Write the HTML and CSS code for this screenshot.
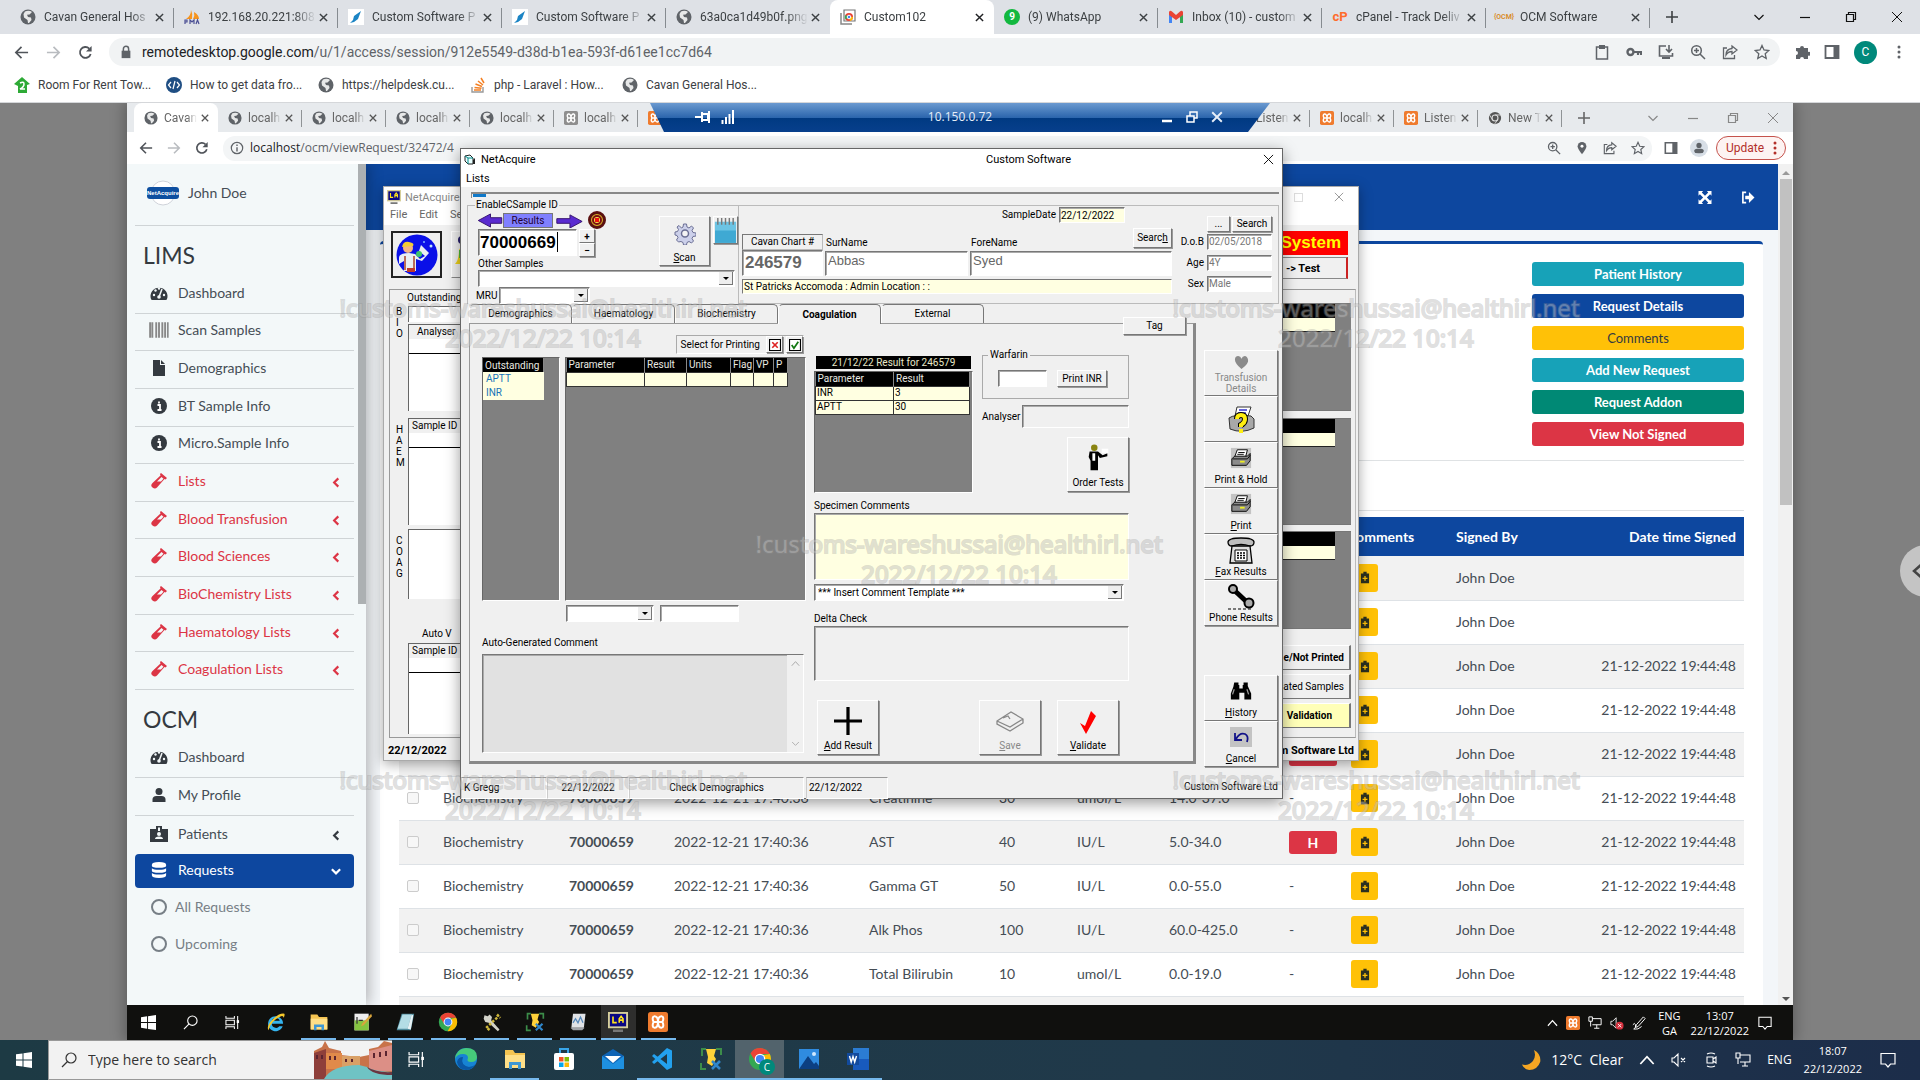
FILE: index.html
```html
<!DOCTYPE html>
<html lang="en">
<head>
<meta charset="utf-8">
<title>Custom102</title>
<link rel="stylesheet" href="styles.css">
</head>
<body>
<svg class="defs" width="0" height="0" aria-hidden="true">
  <symbol id="globe" viewBox="0 0 16 16"><circle cx="8" cy="8" r="7.5" fill="#5f6368"/><path d="M5 2.5Q9 1 12 3L9.500 5.500 7 5.800 8 8l3 .5.500 2.500-2.500 3H8L7.500 11 4 8.500 3.500 5z" fill="#fff" opacity=".85"/></symbol>
  <symbol id="close" viewBox="0 0 10 10"><path d="M1 1l8 8M9 1L1 9" stroke="currentColor" stroke-width="1.600"/></symbol>
  <symbol id="thinx" viewBox="0 0 12 12"><path d="M1 1l10 10M11 1L1 11" stroke="currentColor"/></symbol>
  <symbol id="plus" viewBox="0 0 12 12"><path d="M6 0v12M0 6h12" stroke="currentColor" stroke-width="1.600"/></symbol>
  <symbol id="chev" viewBox="0 0 12 12"><path d="M1.500 4L6 8.500 10.500 4" fill="none" stroke="currentColor" stroke-width="1.200"/></symbol>
  <symbol id="up" viewBox="0 0 12 12"><path d="M1 9l5-5.500L11 9" fill="none" stroke="currentColor" stroke-width="1.300"/></symbol>
  <symbol id="min" viewBox="0 0 12 12"><path d="M1 6.500h10" stroke="currentColor" stroke-width="1.200"/></symbol>
  <symbol id="restore" viewBox="0 0 12 12"><path d="M1.500 3.500h7v7h-7zM3.500 3.500v-2h7v7h-2" fill="none" stroke="currentColor" stroke-width="1.200"/></symbol>
  <symbol id="back" viewBox="0 0 16 16"><path d="M15 8H2M8 2L2 8l6 6" fill="none" stroke="currentColor" stroke-width="1.800"/></symbol>
  <symbol id="fwd" viewBox="0 0 16 16"><path d="M1 8h13M8 2l6 6-6 6" fill="none" stroke="currentColor" stroke-width="1.800"/></symbol>
  <symbol id="reload" viewBox="0 0 16 16"><path d="M13.500 9.500A5.800 5.800 0 1 1 12 3.800" fill="none" stroke="currentColor" stroke-width="1.900"/><path d="M14.500 1v6h-6z" fill="currentColor"/></symbol>
  <symbol id="lock" viewBox="0 0 16 16"><path d="M3 6.500h10V15H3z" fill="currentColor"/><path d="M5 7V4.500a3 3 0 0 1 6 0V7" fill="none" stroke="currentColor" stroke-width="1.700"/></symbol>
  <symbol id="info" viewBox="0 0 16 16"><circle cx="8" cy="8" r="6.500" fill="none" stroke="currentColor" stroke-width="1.400"/><path d="M8 7v5M8 4v1.700" stroke="currentColor" stroke-width="1.600"/></symbol>
  <symbol id="clip" viewBox="0 0 16 16"><path d="M2.500 3h11v12h-11z" fill="none" stroke="currentColor" stroke-width="1.500"/><path d="M5 1h6v4H5z" fill="currentColor"/></symbol>
  <symbol id="key" viewBox="0 0 16 16"><circle cx="4.500" cy="8" r="3" fill="none" stroke="currentColor" stroke-width="2.400"/><path d="M7 8h8v3M12 8v3" stroke="currentColor" stroke-width="2.200" fill="none"/></symbol>
  <symbol id="install" viewBox="0 0 16 16"><path d="M8 2H1.500v10h13V9M11 1v7M8 5l3 3 3-3" fill="none" stroke="currentColor" stroke-width="1.600"/><path d="M4 13h8v2H4z" fill="currentColor"/></symbol>
  <symbol id="zoomi" viewBox="0 0 16 16"><circle cx="6.500" cy="6.500" r="4.800" fill="none" stroke="currentColor" stroke-width="1.500"/><path d="M10 10l5 5M6.500 4v5M4 6.500h5" stroke="currentColor" stroke-width="1.500"/></symbol>
  <symbol id="share" viewBox="0 0 16 16"><path d="M5 4H1.500v10.500h11V11M10 2l5 4-5 4V7.500Q6 7.500 4 11q0-6 6-6.500z" fill="none" stroke="currentColor" stroke-width="1.300"/></symbol>
  <symbol id="star" viewBox="0 0 16 16"><path d="M8 1.500l2 4.500 4.800.5-3.600 3.200 1 4.800L8 12l-4.200 2.500 1-4.800L1.200 6.500 6 6z" fill="none" stroke="currentColor" stroke-width="1.300"/></symbol>
  <symbol id="puzzle" viewBox="0 0 16 16"><path d="M2 4h4a2 2 0 1 1 4 0h4v4a2 2 0 1 1 0 3.500V15h-4a2 2 0 1 0-4 0H2v-4a2 2 0 1 0 0-4z" fill="currentColor"/></symbol>
  <symbol id="panel" viewBox="0 0 16 16"><path d="M1.500 2h13v12h-13z" fill="none" stroke="currentColor" stroke-width="1.800"/><path d="M9.500 2h5v12h-5z" fill="currentColor"/></symbol>
  <symbol id="dots" viewBox="0 0 16 16"><circle cx="8" cy="3" r="1.500" fill="currentColor"/><circle cx="8" cy="8" r="1.500" fill="currentColor"/><circle cx="8" cy="13" r="1.500" fill="currentColor"/></symbol>
  <symbol id="pin" viewBox="0 0 16 16"><path d="M8 1a5 5 0 0 1 5 5c0 3.500-5 9-5 9S3 9.500 3 6a5 5 0 0 1 5-5z" fill="currentColor"/><circle cx="8" cy="6" r="1.700" fill="#fff"/></symbol>
  <symbol id="person" viewBox="0 0 16 16"><circle cx="8" cy="4.500" r="3.500" fill="currentColor"/><path d="M1.500 15v-2.500q0-3.500 4-3.500h5q4 0 4 3.500V15z" fill="currentColor"/></symbol>
  <symbol id="blue" viewBox="0 0 16 16"><path d="M0 0h16v16H0z" fill="#fff"/><path d="M13 2L6 7l-1 4-3 3 4-1 4-3z" fill="#1b84c4"/></symbol>
  <symbol id="pma" viewBox="0 0 16 16"><path d="M7 1Q9 5 8 10H2q5-3 5-9zM10 3q5 3 5 7H9q2-3 1-7z" fill="#f7941d"/><path d="M1 15v-4h2v2H1M6 15v-4l2 2 2-2v4M12 15l1.500-4 1.500 4" fill="none" stroke="#4b4f94" stroke-width="1.200"/></symbol>
  <symbol id="crd" viewBox="0 0 16 16"><path d="M4 1h11v11H4z" fill="#fff" stroke="#777" stroke-width="1.200"/><path d="M1 4v11h11" fill="none" stroke="#888" stroke-width="1.500"/><circle cx="9" cy="8" r="4" fill="#ea4335"/><path d="M9 8l-3.500 2.500A4 4 0 0 1 5.500 6z" fill="#34a853"/><path d="M9 8h4q0 3-3 4z" fill="#fbbc04"/><circle cx="9" cy="8" r="1.800" fill="#4285f4" stroke="#fff"/></symbol>
  <symbol id="gmail" viewBox="0 0 16 16"><path d="M1 14V3l3 2v9z" fill="#4285f4"/><path d="M15 14V3l-3 2v9z" fill="#34a853"/><path d="M1 3q1-2 3-.5l4 3.500 4-3.500Q14 1 15 3v3l-7 5-7-5z" fill="#ea4335"/></symbol>
  <symbol id="xampp" viewBox="0 0 16 16"><rect width="16" height="16" rx="2" fill="#ef7b2e"/><path d="M4.500 3.500Q8 3 8 8t3.500 4.500M11.500 3.500Q8 3 8 8t-3.500 4.500M4.500 3.500q-1.500 1.500 0 4.500-1.500 3 0 4.500M11.500 3.500q1.500 1.500 0 4.500 1.500 3 0 4.500M4.500 8h7" fill="none" stroke="#fff" stroke-width="1.600"/></symbol>
  <symbol id="chrome" viewBox="0 0 24 24"><circle cx="12" cy="12" r="11" fill="#34a853"/><path d="M2.500 6.500A11 11 0 0 1 21.800 7H12l-4.500 7.500z" fill="#ea4335"/><path d="M21.800 7A11 11 0 0 1 11.500 23l5-8.500L16 8z" fill="#fbbc04"/><circle cx="12" cy="12" r="5.300" fill="#fff"/><circle cx="12" cy="12" r="4.100" fill="#4285f4"/></symbol>
  <symbol id="chromeg" viewBox="0 0 16 16"><circle cx="8" cy="8" r="7" fill="#555"/><circle cx="8" cy="8" r="3.400" fill="#555" stroke="#ddd" stroke-width="1.300"/><path d="M8 4.500h7M5 10L1.500 4M11 10l-3.500 5" stroke="#ddd"/></symbol>
  <symbol id="win" viewBox="0 0 16 16"><path d="M0 2.300L6.500 1.400v6.100H0zM7.500 1.200L16 0v7.500H7.500zM0 8.500h6.500v6.100L0 13.700zM7.500 8.500H16V16l-8.500-1.200z" fill="#fff"/></symbol>
  <symbol id="mag" viewBox="0 0 16 16"><circle cx="10" cy="6" r="5" fill="none" stroke="currentColor" stroke-width="1.200"/><path d="M6.500 9.500L1 15" stroke="currentColor" stroke-width="1.200"/></symbol>
  <symbol id="taskv" viewBox="0 0 16 16"><path d="M1 1v2.500h9V1M1 15v-2.500h9V15M1 5.500h9v5H1zM13.500 1v14" fill="none" stroke="#fff" stroke-width="1.100"/><path d="M12.500 5.500h2.500v3h-2.500z" fill="#fff"/></symbol>
  <symbol id="folder" viewBox="0 0 24 24"><path d="M2 3h8l2 3h10v15H2z" fill="#f5c451"/><path d="M2 8h20v13H2z" fill="#ffdf87"/><path d="M6 22v-7h12v7h-3v-4H9v4z" fill="#3f97d3"/></symbol>
  <symbol id="ie" viewBox="0 0 24 24"><path d="M20 14H7a5 5 0 0 0 9 3h4A9 9 0 1 1 20.500 14zM7 10.500h9.500a5 5 0 0 0-9.500 0z" fill="#35b4ee"/><path d="M3 22q-3-5 5-13T22 2q1 2-1 5 0-3-3-2Q5 11 3 22z" fill="#f6c92c"/></symbol>
  <symbol id="npp" viewBox="0 0 24 24"><path d="M3 2h17v20H3z" fill="#eee"/><path d="M3 10h17v12H3z" fill="#85c440"/><path d="M6 6v8M8 10h5" stroke="#333" stroke-width="1.500"/><path d="M23 2L12 14l-1 3 3-1L24 5z" fill="#d9a53c"/></symbol>
  <symbol id="notepad" viewBox="0 0 24 24"><path d="M8 2h15l-4 20H2z" fill="#4f8b9c"/><path d="M9 3h11l-5 17H3z" fill="#b4dde5"/><path d="M15 20l5-17 2 1-3 17z" fill="#e8f3f5"/></symbol>
  <symbol id="tools" viewBox="0 0 24 24"><path d="M3 4l4 1 2-2 3 3-1 4 10 11-2 2L8 13l-4-1-2-4z" fill="#d2d2c8"/><path d="M5 19L20 5M7 22l3-4M18 3l4 4" stroke="#cfb83b" stroke-width="3" stroke-dasharray="3 2"/></symbol>
  <symbol id="putty" viewBox="0 0 24 24"><path d="M7 2h10l-2 7 2 3-4 7-5-3 1-6z" fill="#ffd23a"/><path d="M3 9V2h4M17 2h5v6M2 16v6h5" fill="none" stroke="#3c8d4a" stroke-width="2"/><path d="M13 14l8 8M21 14l-8 8" stroke="#2f86ca" stroke-width="2.500"/></symbol>
  <symbol id="doc" viewBox="0 0 24 24"><path d="M6 2h15l-2 17H4z" fill="#e0e3e6"/><path d="M6 13l3-5 3 5 3-7 3 7" fill="none" stroke="#5689ba" stroke-width="1.500"/><path d="M3 19h17l-3 3H6z" fill="#9fa3a8"/></symbol>
  <symbol id="la" viewBox="0 0 16 16"><path d="M0 0h16v13H0z" fill="#d6cf9a"/><path d="M1.500 1.500h13v10h-13z" fill="#090783"/><path d="M4 3.500v5h3M9 8.500v-3l1.500-2 1.500 2v3M9 6.500h3" stroke="#ffe31c" fill="none" stroke-width="1.300"/><path d="M4 14h8v2H4z" fill="#777"/></symbol>
  <symbol id="edge" viewBox="0 0 24 24"><circle cx="12" cy="12" r="11" fill="#1783d4"/><path d="M1 12Q2 2 12 1q11 0 11 9 0 5-6 5-5 0-3-4 0-4-5-4-6 0-8 5z" fill="#46ca7b"/><path d="M9 10q-3 8 6 10 4 0 7-3-4 6-10 6Q4 22 3 15q1-5 6-5z" fill="#0a57a4"/></symbol>
  <symbol id="store" viewBox="0 0 24 24"><path d="M8 7V2h8v5" fill="none" stroke="#38a5e8" stroke-width="2"/><rect x="2" y="6" width="20" height="17" rx="2" fill="#fff"/><path d="M7 10h4.500v4.500H7z" fill="#f35325"/><path d="M12.500 10H17v4.500h-4.500z" fill="#81bc06"/><path d="M7 15.500h4.500V20H7z" fill="#05a6f0"/><path d="M12.500 15.500H17V20h-4.500z" fill="#ffba08"/></symbol>
  <symbol id="mail" viewBox="0 0 24 24"><path d="M1 9L12 2l11 7v13H1z" fill="#0f64b5"/><path d="M4 9h16l-8 7z" fill="#fff"/><path d="M1 22V9l11 8 11-8v13z" fill="#1e90e0"/></symbol>
  <symbol id="code" viewBox="0 0 24 24"><path d="M17 1l5 2.500v17L17 23 2 9l2-2 13 10V7L4 17l-2-2z" fill="#23a1ee"/></symbol>
  <symbol id="photo" viewBox="0 0 24 24"><path d="M2 2h20v20H2z" fill="#2f8be0"/><path d="M2 22L11 9l6 8 2-2 3 4v3z" fill="#0c3f82"/><circle cx="17" cy="7" r="2" fill="#cfe9ff"/></symbol>
  <symbol id="word" viewBox="0 0 24 24"><path d="M7 1h16v22H7z" fill="#2b7cd3"/><path d="M7 12h16v11H7z" fill="#185abd"/><path d="M1 6h12v12H1z" fill="#124a9d"/><path d="M3.500 9l1.700 6L7 9.500 8.700 15l1.800-6" fill="none" stroke="#fff" stroke-width="1.400"/></symbol>
  <symbol id="net" viewBox="0 0 16 16"><path d="M5 3h10v7H5M10 10v4M7 14h6M1 1h4v5H1zM3 6v6" fill="none" stroke="#fff" stroke-width="1.100"/></symbol>
  <symbol id="mute" viewBox="0 0 16 16"><path d="M1 6h2l4-4v12l-4-4H1zM10 6l4 4M14 6l-4 4" fill="none" stroke="#fff" stroke-width="1.100"/></symbol>
  <symbol id="note" viewBox="0 0 16 16"><path d="M1 1.500h14v10.500h-4.500L8 15l-2.500-3H1z" fill="none" stroke="#fff" stroke-width="1.200"/></symbol>
  <symbol id="pen" viewBox="0 0 16 16"><path d="M13 1l2 2-8 9-3 1 1-3zM1 10q2-3 3 0t-2 5q5 1 9-3" fill="none" stroke="#fff" stroke-width="1.100"/></symbol>
  <symbol id="cam" viewBox="0 0 16 16"><path d="M4 5h6v6H4zM10 7l3-2v6l-3-2M4 2q4-2 8 0M4 14q4 2 8 0" fill="none" stroke="#fff" stroke-width="1.100"/></symbol>
  <symbol id="dash" viewBox="0 0 18 16"><path d="M1 14A8.500 8.500 0 1 1 17 14q0 1-1.500 1h-13Q1 15 1 14z" fill="currentColor"/><g fill="#f3f8f9"><circle cx="4" cy="10" r="1.200"/><circle cx="5.500" cy="5.500" r="1.200"/><circle cx="9" cy="3.500" r="1.200"/><circle cx="14" cy="10" r="1.200"/><circle cx="9" cy="12" r="1.800"/></g><path d="M9 12l3-8" stroke="#f3f8f9" stroke-width="1.500"/></symbol>
  <symbol id="bars" viewBox="0 0 18 14"><path d="M1 0v14M3 0v14M6.500 0v14M9 0v14M12 0v14M14.500 0v14" stroke="#888" stroke-width="1.700"/><path d="M17 0v14" stroke="#555"/></symbol>
  <symbol id="file" viewBox="0 0 14 16"><path d="M1 0h7v5h5v11H1z" fill="currentColor"/><path d="M9 0l4 4H9z" fill="currentColor"/></symbol>
  <symbol id="infof" viewBox="0 0 16 16"><circle cx="8" cy="8" r="8" fill="currentColor"/><path d="M6.500 7H9v5m-2.500 0h4M8 3.500v2" stroke="#fff" stroke-width="1.800" fill="none"/></symbol>
  <symbol id="vial" viewBox="0 0 16 16"><path d="M10 0l6 5-1.500 1.500-1-.5L6 14.500Q4 16.500 1.500 14.500T1.500 10L9.500 2.500 9 1z" fill="currentColor"/><path d="M10.500 4L12.500 5.800 10 8.500H6z" fill="#f3f8f9"/></symbol>
  <symbol id="left" viewBox="0 0 8 12"><path d="M6.500 1.500L2 6l4.500 4.500" fill="none" stroke="currentColor" stroke-width="2.400"/></symbol>
  <symbol id="badge" viewBox="0 0 18 16"><path d="M0 3h6V0h6v3h6v13H0z" fill="currentColor"/><circle cx="9" cy="8" r="2" fill="#f3f8f9"/><path d="M5 13q0-2.500 4-2.500t4 2.500zM8 1.500h2V5H8z" fill="#f3f8f9"/></symbol>
  <symbol id="db" viewBox="0 0 16 18"><path d="M0 3q0-3 8-3t8 3v1.500q0 2-8 2t-8-2zM0 7q2 1.700 8 1.700T16 7v3q0 2-8 2t-8-2zM0 12.500q2 1.700 8 1.700t8-1.700V15q0 3-8 3t-8-3z" fill="#fff"/></symbol>
  <symbol id="notem" viewBox="0 0 12 16"><path d="M1 3h10v12H1zM4 1h4v3H4z" fill="#2c3020"/><path d="M6 6v6M3 9h6" stroke="#ffc107" stroke-width="1.600"/></symbol>
  <symbol id="printer" viewBox="0 0 24 24"><path d="M1 1h22v22H1z" fill="#c3c3c3"/><path d="M8 3h11l-2 8H5z" fill="#fff" stroke="#000"/><path d="M9 6h7M8 8h7" stroke="#000"/><path d="M5 10h14l3-3v8l-4 5H2v-7z" fill="#8b8b8b" stroke="#000"/><path d="M3 13h16l3-4" fill="none" stroke="#000"/><path d="M11 16h5" stroke="#ee2" stroke-width="2"/></symbol>
</svg>

<header class="host">
  <nav class="tabs" aria-label="Browser tabs">
    <div class="tab"><svg><use href="#globe"/></svg><span>Cavan General Hos</span><svg class="x"><use href="#close"/></svg></div>
    <div class="tab"><svg><use href="#pma"/></svg><span>192.168.20.221:808</span><svg class="x"><use href="#close"/></svg></div>
    <div class="tab"><svg><use href="#blue"/></svg><span>Custom Software P</span><svg class="x"><use href="#close"/></svg></div>
    <div class="tab"><svg><use href="#blue"/></svg><span>Custom Software P</span><svg class="x"><use href="#close"/></svg></div>
    <div class="tab last"><svg><use href="#globe"/></svg><span>63a0ca1d49b0f.png</span><svg class="x"><use href="#close"/></svg></div>
    <div class="tab active"><svg><use href="#crd"/></svg><span>Custom102</span><svg class="x"><use href="#close"/></svg></div>
    <div class="tab"><b class="wa">9</b><span>(9) WhatsApp</span><svg class="x"><use href="#close"/></svg></div>
    <div class="tab"><svg><use href="#gmail"/></svg><span>Inbox (10) - custom</span><svg class="x"><use href="#close"/></svg></div>
    <div class="tab"><b class="cp">cP</b><span>cPanel - Track Deliv</span><svg class="x"><use href="#close"/></svg></div>
    <div class="tab"><b class="ocm">{OCM}</b><span>OCM Software</span><svg class="x"><use href="#close"/></svg></div>
    <svg class="add"><use href="#plus"/></svg>
    <div class="winctl"><svg><use href="#chev"/></svg><svg><use href="#min"/></svg><svg><use href="#restore"/></svg><svg><use href="#thinx"/></svg></div>
  </nav>
  <div class="toolbar">
    <svg class="nav"><use href="#back"/></svg><svg class="nav dim"><use href="#fwd"/></svg><svg class="nav"><use href="#reload"/></svg>
    <div class="url"><svg><use href="#lock"/></svg><p><em>remotedesktop.google.com</em>/u/1/access/session/912e5549-d38d-b1ea-593f-d61ee1cc7d64</p>
      <div class="acts"><svg><use href="#clip"/></svg><svg><use href="#key"/></svg><svg><use href="#install"/></svg><svg><use href="#zoomi"/></svg><svg><use href="#share"/></svg><svg><use href="#star"/></svg></div></div>
    <div class="ext"><svg><use href="#puzzle"/></svg><svg><use href="#panel"/></svg><b class="avatar">C</b><svg><use href="#dots"/></svg></div>
  </div>
  <nav class="marks" aria-label="Bookmarks">
    <a href="#"><svg viewBox="0 0 16 16"><path d="M0 7l8-7 8 7-3 1v8H4V9z" fill="#2eaa36"/><path d="M6 6q4-2 4 1t-4 5h5" fill="none" stroke="#fff" stroke-width="1.500"/></svg>Room For Rent Tow...</a>
    <a href="#"><svg viewBox="0 0 16 16"><circle cx="8" cy="8" r="8" fill="#1f4e83"/><path d="M5 5L2.500 8 5 11M11 5l2.500 3-2.500 3M9 4l-2 8" fill="none" stroke="#fff" stroke-width="1.200"/></svg>How to get data fro...</a>
    <a href="#"><svg><use href="#globe"/></svg>https://helpdesk.cu...</a>
    <a href="#"><svg viewBox="0 0 16 16"><path d="M2 10v5h11v-5" fill="none" stroke="#999" stroke-width="1.400"/><path d="M4 13h7M4.500 10.500l7 .8M5.500 7l6.500 2.500M8 4l5 4M11 1l3 5" stroke="#f48024" stroke-width="1.500"/></svg>php - Laravel : How...</a>
    <a href="#"><svg><use href="#globe"/></svg>Cavan General Hos...</a>
  </nav>
</header>

<main class="stage">
<div class="session">
  <nav class="rtabs" aria-label="Remote browser tabs">
    <div class="rtab active"><svg><use href="#globe"/></svg><span>Cavan</span><svg class="x"><use href="#close"/></svg></div>
    <div class="rtab"><svg><use href="#globe"/></svg><span>localh</span><svg class="x"><use href="#close"/></svg></div>
    <div class="rtab"><svg><use href="#globe"/></svg><span>localh</span><svg class="x"><use href="#close"/></svg></div>
    <div class="rtab"><svg><use href="#globe"/></svg><span>localh</span><svg class="x"><use href="#close"/></svg></div>
    <div class="rtab"><svg><use href="#globe"/></svg><span>localh</span><svg class="x"><use href="#close"/></svg></div>
    <div class="rtab"><svg class="grey"><use href="#xampp"/></svg><span>localh</span><svg class="x"><use href="#close"/></svg></div>
    <div class="rtab"><svg><use href="#xampp"/></svg></div>
    <div class="rtab"></div><div class="rtab"></div><div class="rtab"></div><div class="rtab"></div><div class="rtab"></div><div class="rtab"></div>
    <div class="rtab"><svg><use href="#xampp"/></svg><span>Listen</span><svg class="x"><use href="#close"/></svg></div>
    <div class="rtab"><svg><use href="#xampp"/></svg><span>localh</span><svg class="x"><use href="#close"/></svg></div>
    <div class="rtab"><svg><use href="#xampp"/></svg><span>Listen</span><svg class="x"><use href="#close"/></svg></div>
    <div class="rtab"><svg><use href="#chromeg"/></svg><span>New T</span><svg class="x"><use href="#close"/></svg></div>
    <svg class="add"><use href="#plus"/></svg>
    <div class="rctl"><svg><use href="#chev"/></svg><svg><use href="#min"/></svg><svg><use href="#restore"/></svg><svg><use href="#thinx"/></svg></div>
  </nav>
  <div class="rbar">
    <svg class="nav"><use href="#back"/></svg><svg class="nav dim"><use href="#fwd"/></svg><svg class="nav"><use href="#reload"/></svg>
    <div class="rurl"><svg><use href="#info"/></svg><p><em>localhost</em>/ocm/viewRequest/32472/4</p>
      <div class="racts"><svg><use href="#zoomi"/></svg><svg><use href="#pin"/></svg><svg><use href="#share"/></svg><svg><use href="#star"/></svg></div></div>
    <svg class="side"><use href="#panel"/></svg><svg class="who"><use href="#person"/></svg>
    <button class="update">Update<svg><use href="#dots"/></svg></button>
  </div>

  <div class="rpage">
    <aside class="sidebar">
      <div class="menu">
        <div class="user"><svg viewBox="0 0 32 26"><circle cx="16" cy="13" r="12" fill="#fff" stroke="#cfd3da"/><rect y="7" width="32" height="12" rx="3" fill="#0d4fa0"/><text x="16" y="15" text-anchor="middle" class="logotext">NetAcquire</text></svg>John Doe</div>
        <h2>LIMS</h2>
        <ul class="lims">
          <li><a href="#"><svg><use href="#dash"/></svg>Dashboard</a></li>
          <li><a href="#"><svg><use href="#bars"/></svg>Scan Samples</a></li>
          <li><a href="#"><svg><use href="#file"/></svg>Demographics</a></li>
          <li><a href="#"><svg><use href="#infof"/></svg>BT Sample Info</a></li>
          <li><a href="#"><svg><use href="#infof"/></svg>Micro.Sample Info</a></li>
          <li class="red"><a href="#"><svg><use href="#vial"/></svg>Lists<svg class="arr"><use href="#left"/></svg></a></li>
          <li class="red"><a href="#"><svg><use href="#vial"/></svg>Blood Transfusion<svg class="arr"><use href="#left"/></svg></a></li>
          <li class="red"><a href="#"><svg><use href="#vial"/></svg>Blood Sciences<svg class="arr"><use href="#left"/></svg></a></li>
          <li class="red"><a href="#"><svg><use href="#vial"/></svg>BioChemistry Lists<svg class="arr"><use href="#left"/></svg></a></li>
          <li class="red"><a href="#"><svg><use href="#vial"/></svg>Haematology Lists<svg class="arr"><use href="#left"/></svg></a></li>
          <li class="red"><a href="#"><svg><use href="#vial"/></svg>Coagulation Lists<svg class="arr"><use href="#left"/></svg></a></li>
        </ul>
        <h2>OCM</h2>
        <ul class="ocmlist">
          <li><a href="#"><svg><use href="#dash"/></svg>Dashboard</a></li>
          <li><a href="#"><svg><use href="#person"/></svg>My Profile</a></li>
          <li class="plain"><a href="#"><svg><use href="#badge"/></svg>Patients<svg class="arr"><use href="#left"/></svg></a></li>
          <li class="on"><a href="#"><svg><use href="#db"/></svg>Requests<svg class="arr down"><use href="#left"/></svg></a></li>
          <li class="sub"><a href="#"><i></i>All Requests</a></li>
          <li class="sub"><a href="#"><i></i>Upcoming</a></li>
        </ul>
      </div>
      <div class="sscroll"></div>
    </aside>

    <section class="content">
      <div class="bluebar"><svg viewBox="0 0 14 14"><path d="M0 0h5L3.500 1.500 7 5l3.500-3.500L9 0h5v5l-1.500-1.500L9 7l3.500 3.500L14 9v5H9l1.500-1.500L7 9l-3.500 3.500L5 14H0V9l1.500 1.500L5 7 1.500 3.500 0 5z" fill="#fff"/></svg><svg viewBox="0 0 14 14"><path d="M5 1.500H1.500v11H5" fill="none" stroke="#fff" stroke-width="1.800"/><path d="M4 5h4V1l6 6-6 6V9H4z" fill="#fff"/></svg></div>
      <div class="card">
        <div class="actions">
          <button class="teal">Patient History</button><button class="navy">Request Details</button><button class="amber">Comments</button><button class="teal">Add New Request</button><button class="green">Request Addon</button><button class="crimson">View Not Signed</button>
        </div>
        <div class="filter"></div>
        <table class="results">
          <colgroup><col class="c1"><col class="c2"><col class="c3"><col class="c4"><col class="c5"><col class="c6"><col class="c7"><col class="c8"><col class="c9"><col class="c10"><col class="c11"><col></colgroup>
          <thead><tr><th></th><th></th><th></th><th></th><th></th><th></th><th></th><th></th><th></th><th class="cm">Comments</th><th>Signed By</th><th class="r">Date time Signed</th></tr></thead>
          <tbody>
          <tr><td colspan="9"></td><td><button class="nb" aria-label="Note"><svg><use href="#notem"/></svg></button></td><td>John Doe</td><td></td></tr>
          <tr><td colspan="9"></td><td><button class="nb" aria-label="Note"><svg><use href="#notem"/></svg></button></td><td>John Doe</td><td></td></tr>
          <tr><td colspan="9"></td><td><button class="nb" aria-label="Note"><svg><use href="#notem"/></svg></button></td><td>John Doe</td><td class="r">21-12-2022 19:44:48</td></tr>
          <tr><td colspan="9"></td><td><button class="nb" aria-label="Note"><svg><use href="#notem"/></svg></button></td><td>John Doe</td><td class="r">21-12-2022 19:44:48</td></tr>
          <tr><td colspan="8"></td><td><span class="high"></span></td><td><button class="nb" aria-label="Note"><svg><use href="#notem"/></svg></button></td><td>John Doe</td><td class="r">21-12-2022 19:44:48</td></tr>
          <tr><td><input type="checkbox" aria-label="Select"></td><td>Biochemistry</td><td><b>70000659</b></td><td>2022-12-21 17:40:36</td><td>Creatinine</td><td>30</td><td>umol/L</td><td>14.0-37.0</td><td>-</td><td><button class="nb" aria-label="Note"><svg><use href="#notem"/></svg></button></td><td>John Doe</td><td class="r">21-12-2022 19:44:48</td></tr>
          <tr><td><input type="checkbox" aria-label="Select"></td><td>Biochemistry</td><td><b>70000659</b></td><td>2022-12-21 17:40:36</td><td>AST</td><td>40</td><td>IU/L</td><td>5.0-34.0</td><td><span class="high">H</span></td><td><button class="nb" aria-label="Note"><svg><use href="#notem"/></svg></button></td><td>John Doe</td><td class="r">21-12-2022 19:44:48</td></tr>
          <tr><td><input type="checkbox" aria-label="Select"></td><td>Biochemistry</td><td><b>70000659</b></td><td>2022-12-21 17:40:36</td><td>Gamma GT</td><td>50</td><td>IU/L</td><td>0.0-55.0</td><td>-</td><td><button class="nb" aria-label="Note"><svg><use href="#notem"/></svg></button></td><td>John Doe</td><td class="r">21-12-2022 19:44:48</td></tr>
          <tr><td><input type="checkbox" aria-label="Select"></td><td>Biochemistry</td><td><b>70000659</b></td><td>2022-12-21 17:40:36</td><td>Alk Phos</td><td>100</td><td>IU/L</td><td>60.0-425.0</td><td>-</td><td><button class="nb" aria-label="Note"><svg><use href="#notem"/></svg></button></td><td>John Doe</td><td class="r">21-12-2022 19:44:48</td></tr>
          <tr><td><input type="checkbox" aria-label="Select"></td><td>Biochemistry</td><td><b>70000659</b></td><td>2022-12-21 17:40:36</td><td>Total Bilirubin</td><td>10</td><td>umol/L</td><td>0.0-19.0</td><td>-</td><td><button class="nb" aria-label="Note"><svg><use href="#notem"/></svg></button></td><td>John Doe</td><td class="r">21-12-2022 19:44:48</td></tr>
          <tr><td colspan="12"></td></tr>
          </tbody>
        </table>
      </div>
    </section>
    <div class="pscroll"><i class="tri u"></i><div></div><i class="tri d"></i></div>
  </div>

  <footer class="rtask">
    <div class="sys"><svg><use href="#win"/></svg><svg><use href="#mag"/></svg><svg><use href="#taskv"/></svg></div>
    <div class="apps">
      <span><svg><use href="#ie"/></svg></span><span class="run"><svg><use href="#folder"/></svg></span><span class="run"><svg><use href="#npp"/></svg></span><span class="run"><svg><use href="#notepad"/></svg></span><span class="run"><svg><use href="#chrome"/></svg></span><span class="run"><svg><use href="#tools"/></svg></span><span class="run"><svg><use href="#putty"/></svg></span><span class="run"><svg><use href="#doc"/></svg></span><span class="run lit"><svg><use href="#la"/></svg></span><span class="run"><svg><use href="#xampp"/></svg></span>
    </div>
    <div class="rtray"><svg><use href="#up"/></svg><svg><use href="#xampp"/></svg><svg><use href="#net"/></svg><svg viewBox="0 0 16 16"><path d="M1 6h2l4-4v12l-4-4H1z" fill="none" stroke="#fff"/><circle cx="11" cy="11" r="4.500" fill="#d32f3c"/><path d="M9 9l4 4M13 9l-4 4" stroke="#fff"/></svg><svg><use href="#pen"/></svg><p class="lang">ENG<br>GA</p><p class="clock">13:07<br>22/12/2022</p><svg><use href="#note"/></svg></div>
  </footer>

  <section class="backwin">
    <div class="btitle"><svg><use href="#la"/></svg><span>NetAcquire</span><i class="sq"></i><svg class="bx"><use href="#thinx"/></svg></div>
    <div class="bmenu"><span>File</span><span>Edit</span><span>Search</span></div>
    <div class="btools"><button class="prof" aria-label="Laboratory"><svg viewBox="0 0 42 42"><circle cx="21" cy="21" r="20.500" fill="#0a10e8"/><path d="M3 24q0-5 10-5l6 1 5 5 5-3-6-5 2-6 8 8-7 8-6-2v12H8V27l-5 3z" fill="#e9eef2"/><circle cx="12" cy="14" r="5" fill="#f4b483"/><path d="M6 13q1-6 7-5t4 4z" fill="#f2cc35"/><path d="M9 22v14M18 22v12" stroke="#a8432a" stroke-width="1.500"/><path d="M11 34h8v4h-8z" fill="#c0392b"/><circle cx="23" cy="20" r="3" fill="#3fc26a"/><circle cx="28" cy="8" r="1" fill="#7fb2ff"/><circle cx="35" cy="12" r="1.500" fill="#bfe0ff"/></svg></button><button class="bell" aria-label="Alerts"><svg viewBox="0 0 42 42"><circle cx="10" cy="6" r="4" fill="#28206e"/><path d="M3 30q4-4 4-14 3-6 8-3v17z" fill="#f0d41a"/><path d="M7 16h4v8H7z" fill="#4fbd35"/></svg></button>
      <div class="mode"><b class="sysm">System</b><button class="test">-&gt; Test</button></div></div>
    <div class="bbody">
      <div class="bl">
        <div class="blab">Outstanding</div>
        <div class="brow g1"><p>B<br>I<br>O</p><div class="stack"><div class="bbox thin"></div><div class="bbox"><span class="hd an">Analyser</span></div></div></div>
        <div class="brow g2"><p>H<br>A<br>E<br>M</p><div class="bbox"><span class="hd">Sample ID</span></div></div>
        <div class="brow g3"><p>C<br>O<br>A<br>G</p><div class="bbox"></div></div>
        <div class="auto">Auto V</div>
        <div class="brow g4"><p></p><div class="bbox"><span class="hd">Sample ID</span></div></div>
      </div>
      <div class="br">
        <div class="gg h1"></div><div class="gg h2"></div><div class="gg h3"></div>
        <button class="wb"><b>e/Not Printed</b></button><button class="wb">idated Samples</button><button class="wb yel"><b>Validation</b></button>
      </div>
    </div>
    <div class="bstat"><b>22/12/2022</b><b>m Software Ltd</b></div>
  </section>

  <section class="dialog">
    <div class="dtitle"><svg class="vb" viewBox="0 0 12 12"><path d="M1 2l5-1 3 3v6H4L1 7z" fill="#e8ffff" stroke="#222"/><path d="M1 2l3 2v6M4 4h5" stroke="#088" fill="none"/><path d="M9 6l2-2v6H9z" fill="#222"/></svg><span>NetAcquire</span><span class="cap">Custom Software</span><svg class="dx"><use href="#thinx"/></svg></div>
    <div class="dmenu">Lists</div>
    <div class="dprog"><i></i></div>
    <div class="patient">
      <fieldset class="sample">
        <legend>EnableCSample ID</legend>
        <div class="srow">
          <div class="idblock">
            <div class="arrows"><svg viewBox="0 0 26 16"><path d="M0 8l13-7v4h12v6H13v4z" fill="#5a2bd0" stroke="#33106e"/></svg><span>Results</span><svg viewBox="0 0 28 16"><path d="M28 9L15 2v4H1v5h14v5z" fill="#5a2bd0" stroke="#33106e"/></svg><svg class="target" viewBox="0 0 18 18"><circle cx="9" cy="9" r="7.500" fill="#d8b42b" stroke="#5b1010" stroke-width="3"/><circle cx="9" cy="9" r="4" fill="#ffe14a" stroke="#7a1111" stroke-width="2"/><path d="M7 7h4v4H7z" fill="#e11"/></svg></div>
            <div class="idrow"><input class="idin" type="text" value="70000669" aria-label="Sample ID"><i class="caret"></i><div class="spin"><button>+</button><button>−</button></div></div>
          </div>
          <button class="scan"><svg viewBox="0 0 22 22"><path d="M9.500 1h3l.5 3 2 1 2.500-2 2 2-1.500 2.500 1 2 3 .5v3l-3 .5-1 2 1.500 2.500-2 2-2.500-1.500-2 1-.5 2.500h-3l-.5-2.500-2-1L4.500 19l-2-2L4 14.500l-1-2L1 12V9l2.500-.5 1-2L3 4l2-1.500L7.500 5l1.500-1z" fill="#ccd0ea" stroke="#6b6f94"/><circle cx="11" cy="10.500" r="3.500" fill="#f4f4f4" stroke="#6b6f94" stroke-width="1.500"/></svg><span><u>S</u>can</span></button>
          <button class="pad" aria-label="Notes"><svg viewBox="0 0 24 26"><path d="M1 4h22v22H1z" fill="#3fa9d3"/><path d="M1 4h22v9H1z" fill="#6cc4e4"/><path d="M4 0v7M8 0v7M12 0v7M16 0v7M20 0v7" stroke="#777" stroke-width="1.500"/></svg></button>
        </div>
        <label class="lb" for="other">Other Samples</label>
        <select id="other" class="w100"><option></option></select>
        <div class="mru"><label for="mru">MRU</label><select id="mru"><option></option></select></div>
      </fieldset>
      <div class="person">
        <div class="pmain">
          <div class="sdate"><label for="sd">SampleDate</label><input id="sd" type="text" value="22/12/2022"></div>
          <div class="pgrid labels"><span class="chart">Cavan Chart #</span><label for="sn">SurName</label><label for="fn">ForeName</label><button class="btn find">Searc<u>h</u></button></div>
          <div class="pgrid inputs"><input class="big" type="text" value="246579" aria-label="Cavan Chart #"><input id="sn" type="text" value="Abbas"><input id="fn" type="text" value="Syed"></div>
          <div class="addr">St Patricks Accomoda : Admin Location : :</div>
        </div>
        <div class="pside">
          <div class="pbtn"><button class="btn">...</button><button class="btn">Search</button></div>
          <div class="pf"><label for="dob">D.o.B</label><input id="dob" type="text" value="02/05/2018"></div>
          <div class="pf"><label for="age">Age</label><input id="age" type="text" value="4Y"></div>
          <div class="pf"><label for="sex">Sex</label><input id="sex" type="text" value="Male"></div>
        </div>
      </div>
    </div>
    <div class="dtabs"><button>Demographics</button><button>Haematology</button><button>Biochemistry</button><button class="cur">Coagulation</button><button>External</button></div>
    <div class="work">
      <div class="pane">
        <button class="btn tag">Tag</button>
        <div class="lcol">
          <div class="selp"><div>Select for Printing<button class="btn" aria-label="Clear"><svg viewBox="0 0 11 11"><path d="M.5.5h10v10H.5z" fill="#fff" stroke="#000"/><path d="M3 3l5 5M8 3L3 8" stroke="#d22" stroke-width="1.500"/></svg></button><button class="btn" aria-label="Tick"><svg viewBox="0 0 11 11"><path d="M.5.5h10v10H.5z" fill="#fff" stroke="#000"/><path d="M2.500 5.500l2 3 4-6" fill="none" stroke="#171" stroke-width="1.600"/></svg></button></div></div>
          <div class="grids">
            <div class="well out"><table><thead><tr><th>Outstanding</th></tr></thead><tbody><tr><td>APTT</td></tr><tr><td>INR</td></tr></tbody></table></div>
            <div class="well par"><table><colgroup><col class="p1"><col class="p2"><col class="p3"><col class="p4"><col class="p5"><col class="p6"></colgroup><thead><tr><th>Parameter</th><th>Result</th><th>Units</th><th>Flag</th><th>VP</th><th>P</th></tr></thead><tbody><tr><td></td><td></td><td></td><td></td><td></td><td></td></tr></tbody></table></div>
          </div>
          <div class="entry"><select aria-label="Parameter"><option></option></select><input type="text" aria-label="Value"></div>
          <label class="agl" for="ag">Auto-Generated Comment</label>
          <div class="agbox"><textarea id="ag"></textarea><div class="agsb"><svg><use href="#up"/></svg><svg><use href="#chev"/></svg></div></div>
        </div>
        <div class="rcol">
          <div class="toprow">
            <div class="prev"><h3>21/12/22 Result for 246579</h3><div class="well"><table><colgroup><col class="q1"><col></colgroup><thead><tr><th>Parameter</th><th>Result</th></tr></thead><tbody><tr><td>INR</td><td>3</td></tr><tr><td>APTT</td><td>30</td></tr></tbody></table></div></div>
            <div class="warf">
              <fieldset><legend>Warfarin</legend><input type="text" aria-label="Warfarin"><button class="btn">Print INR</button></fieldset>
              <div class="anl"><label for="an">Analyser</label><input id="an" type="text"></div>
              <button class="btn big6"><svg viewBox="0 0 24 30"><circle cx="8" cy="4" r="3.500" fill="#8a8412"/><path d="M3 8h9l5 4 5-2v3l-8 2-2-3v16H9V21v7H4V18L2 14z" fill="#000"/><path d="M6 10h3v8H6zM16 5h7v5h-7z" fill="#fff"/></svg><span>Order Tests</span></button>
            </div>
          </div>
          <label class="lab1" for="sc">Specimen Comments</label>
          <textarea id="sc" class="sc"></textarea>
          <select class="tmpl" aria-label="Comment template"><option>*** Insert Comment Template ***</option></select>
          <label class="lab2" for="dc">Delta Check</label>
          <textarea id="dc" class="dc"></textarea>
          <div class="bottom"><button class="btn big6 first"><svg viewBox="0 0 26 26"><path d="M13 0v26M0 13h26" stroke="#000" stroke-width="3"/></svg><span><u>A</u>dd Result</span></button><button class="btn big6" disabled><svg viewBox="0 0 28 28"><path d="M1 14L15 5l12 7v4l-13 8L1 17zM1 14l13 6 13-8M7 11l5-2 2 3" fill="none" stroke="#888" stroke-width="1.300"/></svg><span><u>S</u>ave</span></button><button class="btn big6"><svg viewBox="0 0 28 28"><path d="M6 16l5 3 6-15 5 5-10 18z" fill="#f00"/></svg><span><u>V</u>alidate</span></button></div>
        </div>
      </div>
      <div class="rail">
        <button class="btn off"><svg viewBox="0 0 16 16"><path d="M8 15Q1 9 1 5t3.500-4Q7 1 8 4q1-3 3.500-3T15 5t-7 10z" fill="#8b8b8b"/></svg><span>Transfusion<br>Details</span></button>
        <button class="btn lg solo" aria-label="Print help"><svg viewBox="0 0 28 28"><path d="M10 1h14l-3 9H8z" fill="#fff" stroke="#333"/><path d="M12 4h8M11 7h8" stroke="#33c" stroke-width="1.500"/><path d="M2 12q5-4 22-2l3 3v9q-12 6-24 1z" fill="#a8a8a8" stroke="#333"/><path d="M10 13q0-4 4-4t4 4-4 6v2" fill="none" stroke="#000" stroke-width="6"/><path d="M10 13q0-4 4-4t4 4-4 6v2M14 23v4" fill="none" stroke="#fe1" stroke-width="4"/></svg></button>
        <button class="btn"><svg><use href="#printer"/></svg><span>Print &amp; Hold</span></button>
        <button class="btn"><svg><use href="#printer"/></svg><span><u>P</u>rint</span></button>
        <button class="btn lg"><svg viewBox="0 0 28 28"><path d="M1 5q0-4 13-4t13 4q0 4-4 4-9-3-18 0-4 0-4-4z" fill="#bdbdbd" stroke="#000" stroke-width="1.300"/><path d="M5 9h18l2 17H3z" fill="#ddd" stroke="#000" stroke-width="1.300"/><path d="M8 13h12v11H8z" fill="#fff" stroke="#000"/><path d="M10 16h8M10 18.500h8M10 21h8" stroke="#000" stroke-width="1.500" stroke-dasharray="2 1"/></svg><span><u>F</u>ax Results</span></button>
        <button class="btn lg"><svg viewBox="0 0 28 28"><path d="M7 7l15 14" stroke="#000" stroke-width="5"/><circle cx="6" cy="6" r="4" fill="#aaa" stroke="#000" stroke-width="2"/><circle cx="22" cy="20" r="4.500" fill="#aaa" stroke="#000" stroke-width="2"/><path d="M1 26h24" stroke="#000" stroke-dasharray="3 2"/></svg><span>Phone Results</span></button>
        <div class="sp"></div>
        <button class="btn"><svg viewBox="0 0 26 22"><path d="M5 1h5v3h1v4h4V4h1V1h5v4l4 9v7h-8v-8h-6v8H1v-7l3-8z" fill="#000"/><path d="M5 9l-2 6M20 9l2 6" stroke="#999" stroke-width="1.500"/></svg><span><u>H</u>istory</span></button>
        <button class="btn"><svg viewBox="0 0 22 20"><path d="M0 0h22v20H0z" fill="#c3c3c3"/><path d="M5 6v7h7M6 12q4-7 9-5 4 2 2 8" fill="none" stroke="#118" stroke-width="1.800"/></svg><span><u>C</u>ancel</span></button>
      </div>
    </div>
    <div class="dstat"><span class="s1">K Gregg</span><span class="s2">22/12/2022</span><span class="s3">Check Demographics</span><span class="s4">22/12/2022</span><span class="s5">Custom Software Ltd</span></div>
  </section>

  <div class="rdp"><svg class="tack" viewBox="0 0 16 12"><path d="M0 6h7M7 1v10M8 3h5v6H8M14 0v12" fill="none" stroke="#fff" stroke-width="2"/></svg><svg class="sig" viewBox="0 0 14 14"><path d="M1.500 14v-4M5 14V7M8.500 14V4M12 14V0" stroke="#fff" stroke-width="2"/></svg><span>10.150.0.72</span><svg class="k" viewBox="0 0 12 12"><path d="M1 10h10" stroke="#fff" stroke-width="2.500"/></svg><svg class="k" viewBox="0 0 12 12"><path d="M1 5h7v6H1zM4 5V1h7v6H8" fill="none" stroke="#fff" stroke-width="1.500"/></svg><svg class="k"><use href="#close"/></svg></div>

  <p class="wm w1">!customs-wareshussai@healthirl.net<br>2022/12/22 10:14</p>
  <p class="wm w2">!customs-wareshussai@healthirl.net<br>2022/12/22 10:14</p>
  <p class="wm w3">!customs-wareshussai@healthirl.net<br>2022/12/22 10:14</p>
  <p class="wm w4">!customs-wareshussai@healthirl.net<br>2022/12/22 10:14</p>
  <p class="wm w5">!customs-wareshussai@healthirl.net<br>2022/12/22 10:14</p>
</div>
<button class="handle" aria-label="Options"><svg viewBox="0 0 14 16"><path d="M11 1L3 8l8 7" fill="none" stroke="#444" stroke-width="2.500"/></svg></button>
</main>

<footer class="task">
  <div class="start"><svg><use href="#win"/></svg></div>
  <div class="search"><svg><use href="#mag"/></svg><input type="text" placeholder="Type here to search" aria-label="Search">
    <svg class="venice" viewBox="0 0 78 38" preserveAspectRatio="none"><path d="M0 38V10l8-4 3-6 4 7 12 3v4l18 2 10-2V8l9-2 6-6 8 2v36z" fill="#c8734a"/><path d="M0 12l12-4v30H0z" fill="#8e3f3a"/><path d="M12 12h16v16H12z" fill="#e08a4a"/><path d="M28 15h18v12H28z" fill="#d9a066"/><path d="M55 10l23-6v26H55z" fill="#dc8f86"/><path d="M10 38q8-14 35-14l8 2q5 4 25 5v7z" fill="#6fc3c4"/><path d="M53 26q10 6 25 5v3q-20 0-25-8z" fill="#6b3540"/><path d="M3 14v4M8 14v4M16 15v4M21 15v4M60 12v5M66 11v5M72 10v5M32 18v3M38 18v3" stroke="#5b2430" stroke-width="2"/></svg></div>
  <div class="pinned">
    <span class="tv"><svg><use href="#taskv"/></svg></span><span><svg><use href="#edge"/></svg></span><span class="run"><svg><use href="#folder"/></svg></span><span><svg><use href="#store"/></svg></span><span><svg><use href="#mail"/></svg></span><span class="run"><svg><use href="#code"/></svg></span><span class="run"><svg><use href="#putty"/></svg></span><span class="run lit"><svg><use href="#chrome"/></svg><b class="mini">C</b></span><span class="run"><svg><use href="#photo"/></svg></span><span class="run"><svg><use href="#word"/></svg></span>
  </div>
  <div class="tray"><svg class="moon" viewBox="0 0 24 24"><path d="M14 1q8 4 7 13-3 9-12 9-6-1-8-6 7 2 12-4 4-6 1-12z" fill="#f5a623"/></svg><span class="wx">12°C&nbsp; Clear</span><svg><use href="#up"/></svg><svg><use href="#mute"/></svg><svg><use href="#cam"/></svg><svg><use href="#net"/></svg><span>ENG</span><p>18:07<br>22/12/2022</p><svg class="nt"><use href="#note"/></svg></div>
</footer>
</body>
</html>
```
FILE: styles.css
```css
* { box-sizing: border-box; }
html, body { height: 100%; }
body { margin: 0; display: flex; flex-direction: column; overflow: hidden; font: 12px/16px "Open Sans", "Noto Sans", sans-serif; color: #3c4043; background: #808080; }
p, h2, h3, ul { margin: 0; padding: 0; font-weight: 400; }
ul { list-style: none; }
em { font-style: normal; color: #202124; }
a { color: inherit; text-decoration: none; }
svg { flex: none; display: block; width: 16px; height: 16px; }
button, input, select, textarea { font: inherit; color: inherit; margin: 0; padding: 0; border-radius: 0; outline: none; min-width: 0; }
.defs { position: absolute; width: 0; height: 0; }

/* host browser */
.host { flex: none; background: #fff; border-bottom: 1px solid #d5d7da; font-family: Roboto, sans-serif; }
.tabs { display: flex; align-items: center; height: 34px; padding-left: 10px; background: #dee1e6; }
.tab { flex: 0 0 164px; min-width: 0; height: 34px; display: flex; align-items: center; padding: 0 10px; position: relative; }
.tab:not(.active):not(.last)::after { content: ""; position: absolute; right: 0; top: 8px; height: 20px; border-right: 1px solid #868b90; }
.tab span { flex: 1; min-width: 0; margin: 0 3px 0 8px; overflow: hidden; white-space: nowrap; mask-image: linear-gradient(90deg, #000 80%, transparent); }
.tab .x { width: 9px; height: 9px; color: #3c4043; }
.tab.active { background: #fff; border-radius: 8px 8px 0 0; }
.tab.active .x { color: #202124; }
.wa, .cp, .ocm { flex: none; width: 16px; height: 16px; text-align: center; font-size: 10px; line-height: 16px; }
.wa { background: #12b83f; color: #fff; border-radius: 50%; }
.cp { color: #ff6c2c; font-size: 13px; }
.ocm { font-size: 7px; color: #d98d2b; display: flex; justify-content: center; }
.add { width: 12px; height: 12px; margin-left: 16px; }
.winctl { margin-left: auto; display: flex; gap: 34px; padding-right: 17px; color: #111; }
.winctl svg { width: 12px; height: 12px; }
.toolbar { display: flex; align-items: center; height: 36px; padding: 0 13px 0 14px; color: #5f6368; }
.nav { width: 15px; height: 15px; margin-right: 17px; color: #50545a; }
.nav.dim { color: #b9bcc0; }
.url { flex: 1; height: 28px; border-radius: 14px; background: #f1f3f4; display: flex; align-items: center; padding: 0 10px; font-size: 14px; margin-left: -1px; }
.url > svg { width: 14px; height: 14px; margin-right: 9px; }
.acts, .ext { display: flex; gap: 16px; align-items: center; color: #5f6368; }
.acts { margin-left: auto; }
.acts svg { width: 16px; height: 16px; }
.ext { margin-left: 14px; gap: 14px; }
.avatar { width: 23px; height: 23px; border-radius: 50%; background: #00897b; color: #fff; text-align: center; line-height: 23px; font-weight: 400; }
.marks { display: flex; align-items: center; height: 32px; padding: 0 0 2px 14px; white-space: nowrap; }
.marks a { display: flex; align-items: center; gap: 8px; width: 152px; }

/* remote session */
.stage { flex: 1; min-height: 0; position: relative; padding: 0 127px; overflow: hidden; }
.session { position: relative; height: 100%; display: flex; flex-direction: column; background: #fff; box-shadow: 0 0 14px 2px rgba(0,0,0,.3); }
.rtabs { flex: none; display: flex; align-items: center; height: 29px; padding-left: 7px; background: #e7eaed; color: #666; font-family: Roboto, sans-serif; }
.rtab { flex: 0 0 84px; min-width: 0; height: 29px; display: flex; align-items: center; padding: 0 9px 0 10px; position: relative; }
.rtab:not(.active)::after { content: ""; position: absolute; right: 0; top: 7px; height: 17px; border-right: 1px solid #8f9396; }
.rtab svg { width: 14px; height: 14px; }
.rtab .x { width: 8px; height: 8px; color: #555; }
.rtab span { flex: 1; min-width: 0; margin: 0 4px 0 6px; overflow: hidden; white-space: nowrap; mask-image: linear-gradient(90deg, #000 70%, transparent); }
.rtab.active { background: #fff; border-radius: 8px 8px 0 0; }
svg.grey { filter: grayscale(1); }
.rctl { margin-left: auto; display: flex; gap: 28px; padding-right: 14px; color: #888; }
.rctl svg { width: 12px; height: 12px; }
.rbar { flex: none; display: flex; align-items: center; height: 32px; padding: 0 7px 0 12px; color: #5f6368; }
.rbar .nav { width: 14px; height: 14px; margin-right: 14px; }
.rurl { flex: 1; height: 25px; border-radius: 12px; background: #f3f5f6; display: flex; align-items: center; padding: 0 7px; }
.rurl > svg { width: 14px; height: 14px; margin-right: 6px; }
.racts { margin-left: auto; display: flex; gap: 14px; }
.racts svg { width: 14px; height: 14px; }
.side { width: 14px; height: 14px; margin: 0 12px; }
.who { width: 18px; height: 18px; padding: 3px; border-radius: 50%; background: #d7dee6; margin-right: 8px; }
.update { width: 70px; height: 24px; border: 1px solid #c5524c; border-radius: 12px; background: #fdf3f2; color: #b3302a; display: flex; align-items: center; justify-content: space-between; padding: 0 2px 0 9px; font-family: Roboto, sans-serif; }
.rpage { flex: 1; min-height: 0; display: flex; overflow: hidden; font-family: Lato, "Open Sans", sans-serif; font-size: 14px; line-height: 20px; color: #454d55; }
.sidebar { flex: none; width: 239px; display: flex; background: #f3f8f9; box-shadow: 2px 0 14px rgba(0,0,0,.3); z-index: 1; }
.menu { flex: 1; padding: 0 4px 0 8px; }
.user { height: 62px; display: flex; align-items: center; gap: 9px; padding: 0 0 3px 12px; border-bottom: 1px solid #cfd4d6; }
.user svg { width: 32px; height: 26px; }
.logotext { font: bold 6px "Liberation Sans", sans-serif; fill: #fff; }
.menu h2 { height: 50px; line-height: 58px; padding-left: 8px; font-size: 23px; color: #343a40; }
.lims { height: 414px; display: flex; flex-direction: column; }
.lims li { flex: 1; border-bottom: 1px solid #cfd4d6; }
.ocmlist li { height: 38px; border-bottom: 1px solid #cfd4d6; }
.menu a { display: flex; align-items: center; height: 100%; padding: 0 14px 3px; }
.menu a svg { width: 20px; height: 16px; margin-right: 9px; color: #343a40; }
.menu .red, .menu .red a svg { color: #dc3545; }
.menu a .arr { width: 8px; height: 11px; margin: 3px 0 0 auto; }
.menu .down { transform: rotate(-90deg); }
.ocmlist li.plain { border: 0; }
.ocmlist li.on { height: 34px; border: 0; border-radius: 4px; background: #0d479f; color: #fff; }
.menu .on a .arr { color: #fff; }
.ocmlist li.sub { height: 37px; border: 0; color: #777f86; }
.menu .sub a { padding-bottom: 0; }
.sub i { width: 16px; height: 16px; border: 2px solid #777f86; border-radius: 50%; margin: 0 8px 0 2px; }
.sscroll { width: 8px; height: 440px; background: #acb0b2; }
.content { flex: 1; min-width: 0; background: #f3f6f9; }
.bluebar { height: 66px; background: #0d479f; display: flex; justify-content: flex-end; align-items: center; gap: 29px; padding-right: 23px; }
.bluebar svg { width: 14px; height: 13px; }
.card { margin: 11px 15px 0 14px; padding: 0 19px; height: 100%; background: #fff; border-top: 3px solid #0d479f; border-radius: 4px; }
.actions { display: flex; flex-direction: column; align-items: flex-end; gap: 8px; padding: 18px 0 14px; border-bottom: 1px solid #dfe2e4; }
.actions button { width: 212px; height: 24px; border: 0; border-radius: 3px; color: #fff; font-weight: 700; font-size: 13px; }
.actions .amber { color: #343a40; font-weight: 400; }
.teal { background: #17a2b8; } .navy { background: #0d479f; } .amber { background: #ffc107; } .green { background: #008975; } .crimson { background: #dc3545; }
.filter { height: 50px; border-bottom: 1px solid #dfe2e4; margin-bottom: 6px; }
.results { width: 100%; table-layout: fixed; border-collapse: collapse; }
.c1 { width: 36px; } .c2 { width: 126px; } .c3 { width: 105px; } .c4 { width: 195px; } .c5 { width: 130px; } .c6 { width: 78px; } .c7 { width: 92px; } .c8 { width: 120px; } .c9 { width: 62px; } .c10 { width: 105px; } .c11 { width: 110px; }
.results th { height: 39px; background: #0d479f; color: #fff; text-align: left; padding: 0 8px; }
.results th.cm { padding: 0 4px; }
.results td { height: 44px; padding: 0 8px; border-bottom: 1px solid #dee2e6; white-space: nowrap; }
.results tbody tr:nth-child(odd) { background: #f2f2f2; }
.results .r { text-align: right; }
.results input { appearance: none; display: block; width: 12px; height: 12px; border: 1px solid #ccc; border-radius: 2px; background: #f7f7f7; }
.nb { display: flex; align-items: center; justify-content: center; width: 27px; height: 28px; border: 0; border-radius: 3px; background: #ffc107; }
.nb svg { width: 10px; height: 13px; }
.high { display: block; width: 48px; height: 23px; border-radius: 3px; background: #dc3545; color: #fff; font-weight: 700; text-align: center; line-height: 23px; }
.pscroll { width: 15px; background: #f1f1f1; display: flex; flex-direction: column; align-items: center; }
.pscroll div { width: 12px; height: 326px; background: #c1c1c1; }
.tri { border: 4px solid transparent; height: 0; }
.tri.u { border-bottom-color: #999; margin: 3px 0 4px; }
.tri.d { border-top-color: #555; margin-top: auto; }
.rtask { flex: none; height: 35px; display: flex; background: #10100e; color: #fff; }
.sys { display: flex; width: 127px; justify-content: space-around; align-items: center; }
.sys svg { width: 15px; height: 15px; }
.apps { width: 426px; display: flex; }
.apps span { flex: 1; display: flex; align-items: center; justify-content: center; border-bottom: 2px solid transparent; margin: 0 4px; }
.apps svg { width: 20px; height: 20px; }
.apps .run { border-color: #76b9ed; }
.apps .lit { background: #2e2e2d; margin: 0 1px; }
.rtray { margin-left: auto; display: flex; align-items: center; gap: 8px; padding-right: 21px; font-size: 11px; line-height: 15px; text-align: center; }
.rtray svg { width: 14px; height: 14px; }
.rtray svg:first-child { width: 11px; }
.rtray .lang { margin: 0 2px 0 4px; }
.rtray .clock { margin-right: 1px; }

/* background application window */
.backwin { position: absolute; left: 256px; top: 83px; width: 976px; height: 575px; display: flex; flex-direction: column; background: #f0f0f0; border: 1px solid #aaa; font: 10px/13px Roboto, sans-serif; color: #000; box-shadow: 0 3px 12px rgba(0,0,0,.35); z-index: 2; }
.btitle { height: 20px; background: #fff; display: flex; align-items: center; padding: 0 14px 0 3px; gap: 4px; color: #888; font-size: 11px; }
.btitle svg { width: 14px; height: 14px; }
.sq { margin-left: auto; width: 9px; height: 9px; border: 1px solid #ddd; }
.btitle .bx { width: 10px; height: 10px; margin-left: 27px; }
.bmenu { height: 18px; background: #fff; display: flex; gap: 12px; padding-left: 6px; color: #666; font-size: 11px; line-height: 16px; }
.btools { height: 64px; display: flex; gap: 9px; padding: 6px 10px 0 7px; }
.prof { width: 51px; height: 47px; background: #eee; border: 2px solid #222; display: flex; align-items: center; justify-content: center; }
.prof svg, .bell svg { width: 42px; height: 42px; }
.bell { width: 51px; height: 47px; background: #f0f0f0; border: 1px solid; border-color: #fff #888 #888 #fff; }
.mode { margin-left: auto; width: 120px; display: flex; flex-direction: column; gap: 2px; }
.sysm { height: 24px; background: #f00; color: #ff0; font: bold 17px/24px "Liberation Sans", sans-serif; text-align: right; padding-right: 7px; }
.test { height: 22px; border: 1px solid #888; border-right: 2px solid #c22; background: #f0f0f0; font-size: 11px; font-weight: 700; text-align: right; padding-right: 26px; }
.bbody { flex: 1; margin: 0 2px 0 5px; border: 1px solid #999; border-right-color: #bbb; display: flex; justify-content: space-between; padding: 0 4px 0 6px; }
.bl { width: 300px; }
.blab { height: 16px; line-height: 15px; padding-left: 11px; }
.brow { display: flex; }
.brow p { width: 12px; line-height: 11px; }
.bbox, .stack { flex: 1; }
.stack { display: flex; flex-direction: column; gap: 2px; }
.bbox { background: #fff; border: 1px solid #666; border-width: 1px 0 0 1px; }
.thin { flex: 0 0 16px; }
.hd { display: block; height: 14px; padding-left: 3px; background: #f0f0f0; margin-bottom: 14px; box-shadow: 0 14px 0 #fff, 0 15px 0 #000; }
.hd.an { padding-left: 8px; }
.g1 { height: 105px; margin-bottom: 7px; } .g2 { height: 107px; margin-bottom: 4px; } .g3 { height: 70px; }
.g2 p, .g3 p { padding-top: 6px; }
.auto { height: 44px; padding: 28px 0 0 26px; }
.g4 { height: 91px; }
.br { width: 120px; padding-top: 13px; display: flex; flex-direction: column; }
.gg { background: linear-gradient(#000 14px, #ffffe1 14px 27px, #222 27px) no-repeat 0 0 / 104px 28px, #808080; border: solid #777; border-width: 1px 0; }
.h1 { height: 108px; margin-bottom: 7px; } .h2 { height: 107px; margin-bottom: 6px; } .h3 { height: 98px; margin-bottom: 16px; }
.wb { height: 25px; margin-bottom: 4px; border: 1px solid; border-color: #fff #777 #777 #fff; border-right-width: 2px; background: #f0f0f0; text-align: right; padding-right: 5px; }
.wb.yel { background: #ffffb8; padding-right: 17px; }
.bstat { height: 22px; display: flex; justify-content: space-between; align-items: center; padding: 2px 4px 0; font-size: 11px; }

/* results dialog */
.dialog { position: absolute; left: 333px; top: 45px; width: 823px; height: 651px; display: flex; flex-direction: column; background: #f0f0f0; border: 1px solid #666; font: 10px/12px Roboto, sans-serif; color: #000; box-shadow: 0 4px 14px rgba(0,0,0,.4); z-index: 3; }
.dtitle { flex: none; height: 21px; background: #fff; display: flex; align-items: center; padding: 0 8px 0 3px; font-size: 11px; }
.dtitle .vb { width: 12px; height: 12px; margin-right: 5px; }
.cap { margin-left: auto; }
.dx { width: 11px; height: 11px; margin-left: 192px; }
.dmenu { flex: none; height: 17px; background: #fff; padding-left: 5px; font-size: 11px; line-height: 18px; }
.dprog { flex: none; height: 6px; margin: 5px 3px 0 10px; border: 1px solid #888; border-width: 2px 0 0 1px; }
.dprog i { display: block; width: 13px; height: 3px; margin-left: 1px; background: #0f78c8; }
.dialog input, .dialog select, .dialog textarea { border: 1px solid; border-color: #777 #fff #fff #777; box-shadow: inset 1px 1px 0 #aaa; background: #fff; padding: 0 3px; resize: none; }
.dialog select { appearance: none; height: 17px; padding: 0 18px 0 3px; background: #fff url("data:image/svg+xml,%3Csvg xmlns='http://www.w3.org/2000/svg' viewBox='0 0 14 13'%3E%3Cpath d='M0 0h14v13H0z' fill='%23eee'/%3E%3Cpath d='M0 12.500h14M13.500 0v13' stroke='%23777'/%3E%3Cpath d='M4 5h6L7 8z'/%3E%3C/svg%3E") no-repeat right 1px top 1px / 14px 13px; }
.btn, .scan, .pad, .spin button { border: 1px solid; border-color: #fff #777 #777 #fff; box-shadow: 1px 1px 0 #999; background: #f0f0f0; }
.patient { flex: none; display: flex; margin: 1px 3px 0 6px; height: 105px; align-items: flex-start; }
.sample { width: 272px; height: 105px; margin: 0; padding: 0 3px 0 10px; border: 1px solid #bbb; border-bottom: 0; min-width: 0; }
.sample legend { padding: 0 1px; margin-left: -3px; height: 12px; }
.srow { display: flex; height: 47px; align-items: flex-start; }
.arrows { display: flex; height: 18px; align-items: center; }
.arrows svg { width: 25px; height: 15px; }
.arrows span { width: 50px; height: 15px; background: #8080ff; border: 1px solid #777; text-align: center; line-height: 13px; color: #203; }
.arrows span + svg { margin-left: 2px; width: 28px; }
.arrows .target { width: 18px; height: 18px; margin-left: 5px; }
.idrow { display: flex; height: 28px; position: relative; }
.dialog .idin { width: 99px; height: 27px; font: bold 17px "Liberation Sans", sans-serif; padding: 0 1px; }
.caret { position: absolute; left: 79px; top: 3px; height: 20px; border-left: 1px solid #000; }
.spin { display: flex; flex-direction: column; margin-left: 2px; }
.spin button { width: 16px; height: 14px; line-height: 11px; font-weight: 700; }
.scan { width: 51px; height: 50px; margin: 5px 3px 0 auto; display: flex; flex-direction: column; align-items: center; justify-content: space-between; padding: 6px 0 1px; }
.scan svg { width: 22px; height: 22px; }
.pad { width: 25px; height: 28px; margin: 5px -3px 0 0; }
.pad svg { width: 23px; height: 25px; }
.lb { display: block; height: 12px; }
.w100 { display: block; width: 100%; }
.mru { display: flex; align-items: center; gap: 2px; margin-left: -2px; }
.mru select { width: 91px; height: 17px; }
.person { flex: 1; height: 99px; margin-top: 6px; display: flex; border: 1px solid #bbb; border-left: 0; padding: 1px 6px 0 3px; }
.pmain { width: 430px; }
.sdate { display: flex; justify-content: flex-end; align-items: center; height: 16px; gap: 3px; padding-right: 47px; }
.sdate input { width: 66px; height: 16px; }
.dialog .sdate input { background: #ffffe1; padding: 0 1px; }
.pgrid { display: grid; grid-template-columns: 81px 143px 1fr; column-gap: 2px; position: relative; }
.labels { height: 27px; align-items: end; }
.labels label { padding: 0 0 1px 1px; }
.chart { height: 16px; border: 1px solid; border-color: #777 #bbb #bbb #777; text-align: center; line-height: 14px; }
.find { position: absolute; right: 0; top: 5px; width: 39px; height: 20px; }
.inputs { height: 26px; align-items: center; }
.dialog .inputs input { height: 25px; font: 13px "Liberation Sans", sans-serif; color: #666; padding: 0 2px 6px; }
.dialog .inputs .big { height: 26px; font-size: 17px; font-weight: 700; padding: 0 2px; }
.addr { margin-top: 3px; height: 15px; line-height: 13px; background: #ffffe1; border: 1px solid; border-color: #777 #fff #fff #777; padding-left: 1px; white-space: nowrap; }
.pside { flex: 1; padding-top: 9px; display: flex; flex-direction: column; gap: 4px; }
.pbtn { display: flex; justify-content: flex-end; gap: 2px; height: 16px; margin-bottom: -3px; }
.pbtn button { width: 40px; height: 16px; }
.pbtn button:first-child { width: 23px; }
.pf { display: flex; justify-content: flex-end; align-items: center; gap: 3px; height: 17px; }
.pf input { width: 65px; height: 16px; color: #777; }
.dialog .pf input { padding: 0 1px; }
.dtabs { flex: none; display: flex; height: 19px; padding-left: 8px; }
.dtabs button { width: 103px; height: 19px; border: 1px solid #777; border-left-color: #fff; border-bottom: 0; border-radius: 5px 5px 0 0; background: #f0f0f0; text-align: center; }
.dtabs .cur { font-weight: 700; height: 20px; z-index: 1; }
.work { flex: none; height: 441px; display: flex; margin: 0 4px 0 8px; align-items: flex-start; }
.pane { flex: 1; height: 441px; position: relative; display: flex; gap: 8px; padding-left: 12px; border: 1px solid #999; border-right: 3px solid #888; border-bottom: 3px solid #888; }
.tag { position: absolute; right: 7px; top: -7px; width: 63px; height: 18px; }
.lcol { width: 324px; }
.selp { display: flex; justify-content: flex-end; padding: 11px 2px 0 0; height: 33px; }
.selp div { display: flex; align-items: center; gap: 2px; height: 19px; padding-left: 3px; border: 1px solid; border-color: #aaa #fff #fff #aaa; }
.selp button { width: 17px; height: 17px; display: flex; align-items: center; justify-content: center; margin-left: 1px; }
.selp div button:first-of-type { margin-left: 4px; }
.selp svg { width: 12px; height: 12px; }
.grids { display: flex; gap: 5px; height: 244px; }
.well { background: #808080; border: 1px solid; border-color: #666 #fff #fff #666; }
.out { width: 78px; } .par { flex: 1; }
.dialog table { table-layout: fixed; border-collapse: collapse; }
.out table { width: 61px; } .par table { width: 221px; }
.p1 { width: 78px; } .p2 { width: 42px; } .p3 { width: 44px; } .p4 { width: 23px; } .p5 { width: 20px; } .p6 { width: 14px; }
.dialog th { background: #000; color: #e8e8e0; font-weight: 400; text-align: left; height: 14px; padding: 0 2px; border-right: 1px solid #888; line-height: 13px; overflow: hidden; }
.dialog td { background: #ffffe1; height: 14px; padding: 0 1px; border: 1px solid #333; line-height: 12px; }
.dialog .out td { color: #1774b8; border: 0; padding-left: 3px; }
.entry { display: flex; gap: 6px; padding: 4px 0 0 84px; height: 21px; }
.entry select { width: 88px; }
.entry input { width: 79px; }
.agl { display: block; height: 32px; padding-top: 15px; }
.agbox { display: flex; height: 99px; width: 322px; border: 1px solid; border-color: #777 #fff #fff #777; }
.dialog .agbox textarea { flex: 1; background: #e1e1e1; border: 0; }
.agsb { width: 16px; display: flex; flex-direction: column; justify-content: space-between; align-items: center; padding: 4px 0; color: #aaa; }
.agsb svg { width: 9px; height: 9px; }
.rcol { width: 315px; display: flex; flex-direction: column; padding-top: 31px; }
.toprow { height: 138px; display: flex; gap: 9px; }
.prev { flex: none; width: 159px; display: flex; flex-direction: column; gap: 2px; padding-top: 1px; }
.prev h3 { height: 13px; margin: 0 2px 0 2px; background: #000; color: #e8e8c8; font-size: 10px; line-height: 13px; text-align: center; }
.prev .well { flex: 1; }
.prev table { width: 155px; } .q1 { width: 78px; }
.warf { flex: 1; min-width: 0; }
.warf fieldset { height: 50px; margin: -6px 0 6px; min-width: 0; border: 1px solid #aaa; padding: 9px 10px 0 15px; display: flex; gap: 10px; }
.warf legend { padding: 0 2px; margin-left: -10px; }
.warf fieldset input { width: 49px; height: 17px; }
.warf fieldset button { width: 50px; height: 17px; }
.anl { display: flex; align-items: center; height: 23px; margin-bottom: 9px; }
.anl label { flex: 0 0 40px; }
.anl input { flex: 1; width: 0; height: 23px; }
.dialog .anl input { background: #f0f0f0; }
.big6 { width: 62px; height: 55px; display: flex; flex-direction: column; align-items: center; justify-content: space-between; padding: 6px 0 2px; white-space: nowrap; }
.big6 svg { width: 28px; height: 28px; }
.big6:disabled { color: #888; }
.warf .big6 { margin-left: auto; }
.lab1 { height: 20px; padding-top: 7px; }
.dialog .sc { height: 67px; background: #ffffe1; }
.tmpl { margin: 4px 0 0; width: 310px; }
.lab2 { height: 25px; padding-top: 12px; }
.dialog .dc { height: 55px; background: #f0f0f0; }
.bottom { display: flex; gap: 16px; padding: 19px 10px 0 3px; }
.bottom .first { margin-right: auto; }
.rail { width: 74px; margin-left: 8px; padding-top: 27px; display: flex; flex-direction: column; }
.rail button { flex: none; height: 46px; display: flex; flex-direction: column; align-items: center; justify-content: space-between; padding: 4px 0 1px; }
.rail svg { width: 22px; height: 22px; }
.rail .lg { padding-top: 2px; }
.rail .lg svg { width: 28px; height: 28px; }
.rail .solo { justify-content: center; }
.rail .off { color: #888; line-height: 11px; }
.rail .off svg { width: 15px; height: 15px; }
.rail .sp { flex: none; height: 49px; }
.dstat { display: flex; height: 22px; margin-top: 13px; align-items: stretch; line-height: 20px; }
.dstat span { border: 1px solid; border-color: #999 #fff #fff #ccc; text-align: center; }
.dstat .s1 { width: 86px; text-align: left; padding-left: 2px; }
.s2 { width: 82px; } .s3 { width: 175px; }
.dstat .s4 { width: 82px; margin-left: 2px; text-align: left; padding-left: 2px; }
.dstat .s5 { margin-left: auto; border: 0; padding-right: 4px; }

/* remote connection bar */
.rdp { position: absolute; left: 523px; top: 0; width: 620px; height: 29px; z-index: 4; clip-path: polygon(0 0, 100% 0, 598px 100%, 14px 100%); background: linear-gradient(#6b9ad0, #2c66ad 50%, #003a82 52%, #073f8c); color: #e7eef8; display: flex; align-items: center; padding: 0 47px 2px 45px; gap: 13px; }
.rdp span { flex: 1; text-align: center; padding-left: 24px; }
.rdp .tack { width: 16px; height: 12px; }
.rdp .sig { width: 14px; height: 14px; margin-left: -3px; }
.rdp .k { width: 12px; height: 12px; }

/* session watermark */
.wm { position: absolute; width: 420px; text-align: center; font: 24px/30px "Noto Sans", sans-serif; color: rgba(255,255,255,.3); -webkit-text-stroke: 2px rgba(145,145,145,.3); z-index: 5; pointer-events: none; white-space: nowrap; }
.w1 { left: 206px; top: 190px; } .w2 { left: 1039px; top: 190px; } .w3 { left: 622px; top: 426px; } .w4 { left: 206px; top: 662px; } .w5 { left: 1039px; top: 662px; }

.handle { position: absolute; right: -32px; top: 442px; width: 52px; height: 52px; border: 0; border-radius: 50%; background: #c4c4c4; padding-left: 11px; }
.handle svg { width: 14px; height: 16px; }

/* host taskbar */
.task { flex: none; height: 40px; display: flex; background: linear-gradient(90deg, #1d3a44, #20394a 60%, #1c2d4a); color: #fff; }
.start { width: 48px; display: flex; align-items: center; justify-content: center; }
.search { width: 344px; background: #f2f2f2; color: #333; display: flex; align-items: center; padding-left: 12px; gap: 11px; border: 1px solid #999; border-right: 0; }
.search input { flex: 1; border: 0; background: none; font-size: 14px; }
.search input::placeholder { color: #333; opacity: 1; }
.search .venice { width: 78px; height: 38px; }
.pinned { display: flex; }
.pinned span { width: 49px; display: flex; align-items: center; justify-content: center; border-bottom: 2px solid transparent; background-clip: padding-box; position: relative; }
.pinned svg { width: 24px; height: 24px; }
.pinned .tv svg { width: 17px; height: 17px; }
.pinned .run { border-bottom-color: #76b9ed; }
.pinned .lit { background: #52636c; }
.mini { position: absolute; right: 9px; bottom: 3px; width: 16px; height: 16px; border-radius: 50%; background: #00897b; font-size: 10px; line-height: 16px; text-align: center; font-weight: 400; }
.tray { margin-left: auto; display: flex; align-items: center; gap: 16px; padding-right: 24px; }
.tray svg { width: 16px; height: 16px; }
.tray .moon { width: 22px; height: 22px; margin-right: -8px; }
.tray .wx { font-size: 14px; }
.tray p { font-size: 11px; line-height: 18px; text-align: center; margin-left: -4px; }
.tray .nt { margin-left: 2px; }
```
